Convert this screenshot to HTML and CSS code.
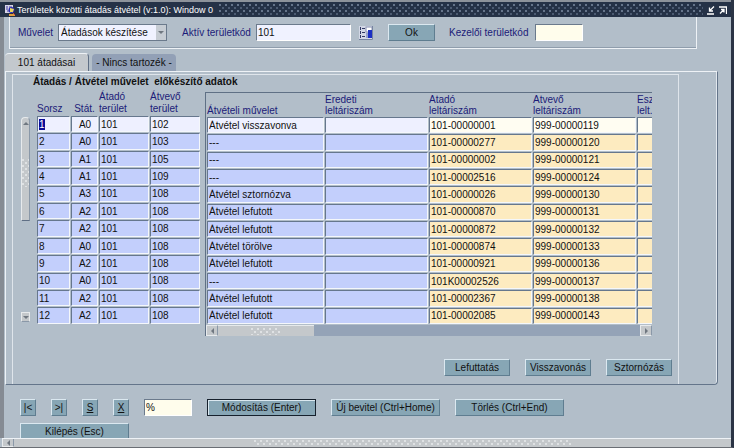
FILE: index.html
```html
<!DOCTYPE html>
<html lang="hu">
<head>
    <meta charset="UTF-8">
    <meta name="viewport" content="width=device-width, initial-scale=1.0">
    <title>Területek közötti átadás átvétel</title>
    <link rel="stylesheet" href="styles.css">
</head>
<body>
    <div class="window">
        <header class="titlebar">
            <svg class="app-icon" width="11" height="12" viewBox="0 0 11 12">
                <rect x="0" y="1" width="8" height="8" fill="#d8d4e8"/>
                <path d="M1 3h2M4 3h3M1 5h2M2 7h2" stroke="#3a3a9a"/>
                <circle cx="6.500" cy="6" r="3" fill="#2a2ab0"/>
                <path d="M5 4l4 1-1 3-3 0z" fill="#e8d860"/>
                <path d="M4 10h6v2H4z" fill="#e0a040"/>
                <path d="M8 9l2 2" stroke="#c04040"/>
            </svg>
            <span class="title">Területek közötti átadás átvétel (v:1.0): Window 0</span>
            <span class="grip"></span>
            <button class="title-btn" type="button" aria-label="Kis méret">
                <svg width="8" height="9" viewBox="0 0 8 9"><path d="M7 0.500L3 4.500M2.500 1.500V5H6M0 8H7" fill="none" stroke="#fff" stroke-width="1.300"/></svg>
            </button>
            <button class="title-btn" type="button" aria-label="Teljes méret">
                <svg width="8" height="9" viewBox="0 0 8 9"><path d="M0 1H7.500V8M1 7.500L5 3.500M2 3.500H5V6.500" fill="none" stroke="#fff" stroke-width="1.300"/></svg>
            </button>
        </header>

        <main class="content">
            <!-- Top filter bar -->
            <form class="filter">
                <label class="label-op" for="muvelet">Művelet</label>
                <span class="select-box">
                    <select id="muvelet">
                        <option>Átadások készítése</option>
                    </select>
                    <i class="select-arrow"><i class="arrow down"></i></i>
                </span>
                <label class="label-area" for="terulet">Aktív területkód</label>
                <input class="field active-area" type="text" id="terulet" value="101">
                <button class="list-btn" type="button" aria-label="Lista">
                    <svg width="14" height="14" viewBox="0 0 14 14">
                        <rect width="14" height="14" fill="#d3d8e6"/>
                        <path d="M1.500 1V12M3 2.500H6M3 6.500H6M3 10.500H6" stroke="#333a66" stroke-dasharray="3 1"/>
                        <rect x="7" y="1" width="6" height="5" fill="#fff" stroke="#8890b0"/>
                        <path d="M9 4h4v8h-4z" fill="#1b2fc4"/>
                        <path d="M7 7h2v5h-2z" fill="#93a0cc"/>
                        <path d="M0 13.500H13.500V0" fill="none" stroke="#7684a0"/>
                    </svg>
                </button>
                <button class="btn ok" type="button">Ok</button>
                <label class="label-user" for="kezelo">Kezelői területkód</label>
                <input class="field cream user-area" type="text" id="kezelo">
            </form>

            <div class="tabs" role="tablist">
                <button class="tab selected" type="button" role="tab" aria-selected="true">101 átadásai</button>
                <button class="tab" type="button" role="tab" aria-selected="false">- Nincs tartozék -</button>
            </div>

            <section class="panel">
                <div class="frame">
                    <h2>Átadás / Átvétel művelet&nbsp; előkészítő adatok</h2>
                    <div class="grids">
                        <div class="vscroll">
                            <div class="vthumb"><i class="arrow up"></i><i class="dots"></i></div>
                            <div class="vdown"><i class="arrow down"></i></div>
                        </div>

                        <table class="grid left">
                            <colgroup>
                                <col class="c-num"><col class="c-stat"><col class="c-area"><col class="c-area">
                            </colgroup>
                            <thead>
                                <tr><th>Sorsz</th><th class="mid">Stát.</th><th>Átadó<br>terület</th><th>Átvevő<br>terület</th></tr>
                            </thead>
                            <tbody id="leftRows"></tbody>
                        </table>

                        <div class="pane">
                            <table class="grid right">
                                <colgroup>
                                    <col class="c-op"><col class="c-inv"><col class="c-inv"><col class="c-inv"><col class="c-inv">
                                </colgroup>
                                <thead>
                                    <tr><th>Átvételi művelet</th><th>Eredeti<br>leltáriszám</th><th>Atadó<br>leltáriszám</th><th>Atvevő<br>leltáriszám</th><th>Esz<br>lelt.</th></tr>
                                </thead>
                                <tbody id="rightRows"></tbody>
                            </table>
                            <div class="hscroll">
                                <div class="hend"><i class="arrow prev"></i></div>
                                <div class="hthumb"><i class="dots"></i></div>
                                <div class="hend last"><i class="arrow next"></i></div>
                            </div>
                        </div>
                    </div>
                    <div class="actions">
                        <button class="btn" type="button">Lefuttatás</button>
                        <button class="btn" type="button">Visszavonás</button>
                        <button class="btn" type="button">Sztornózás</button>
                    </div>
                </div>
            </section>

            <div class="commands">
                <button class="btn small" type="button">|&lt;</button>
                <button class="btn small" type="button">&gt;|</button>
                <button class="btn small" type="button"><u>S</u></button>
                <button class="btn small" type="button"><u>X</u></button>
                <input class="field cream search" type="text" value="%" aria-label="Keresés">
                <button class="btn wide default" type="button">Módosítás (Enter)</button>
                <button class="btn wide" type="button">Új bevitel (Ctrl+Home)</button>
                <button class="btn wide" type="button">Törlés (Ctrl+End)</button>
            </div>
            <button class="btn wide exit" type="button">Kilépés (Esc)</button>
        </main>

        <div class="window-scroll">
            <div class="hend"><i class="arrow prev"></i></div>
            <div class="texture"></div>
        </div>
    </div>

    <script>
        // sorszám, státusz, átadó, átvevő, művelet, átadó leltáriszám, átvevő leltáriszám
        var rows = [
            ["1", "A0", "101", "102", "Átvétel visszavonva", "101-00000001", "999-00000119"],
            ["2", "A0", "101", "103", "---", "101-00000277", "999-00000120"],
            ["3", "A1", "101", "105", "---", "101-00000002", "999-00000121"],
            ["4", "A1", "101", "109", "---", "101-00002516", "999-00000124"],
            ["5", "A3", "101", "108", "Átvétel sztornózva", "101-00000026", "999-00000130"],
            ["6", "A2", "101", "108", "Átvétel lefutott", "101-00000870", "999-00000131"],
            ["7", "A2", "101", "108", "Átvétel lefutott", "101-00000872", "999-00000132"],
            ["8", "A0", "101", "108", "Átvétel törölve", "101-00000874", "999-00000133"],
            ["9", "A2", "101", "108", "Átvétel lefutott", "101-00000921", "999-00000136"],
            ["10", "A0", "101", "108", "---", "101K00002526", "999-00000137"],
            ["11", "A2", "101", "108", "Átvétel lefutott", "101-00002367", "999-00000138"],
            ["12", "A2", "101", "108", "Átvétel lefutott", "101-00002085", "999-00000143"]
        ];

        function addRow(body, cells) {
            var tr = document.createElement("tr");
            cells.forEach(function(cell) {
                var td = document.createElement("td");
                var input = document.createElement("input");
                td.className = cell[2] || "";
                input.type = "text";
                input.value = cell[0];
                input.setAttribute("aria-label", cell[1]);
                td.appendChild(input);
                tr.appendChild(td);
            });
            body.appendChild(tr);
        }

        rows.forEach(function(r) {
            addRow(document.getElementById("leftRows"), [
                [r[0], "Sorsz"], [r[1], "Stát.", "mid"], [r[2], "Átadó terület"], [r[3], "Átvevő terület"]
            ]);
            addRow(document.getElementById("rightRows"), [
                [r[4], "Átvételi művelet"], ["", "Eredeti leltáriszám"],
                [r[5], "Átadó leltáriszám", "yellow"], [r[6], "Átvevő leltáriszám", "yellow"],
                ["", "Eszköz leltáriszám", "yellow"]
            ]);
        });

        // Start on the first record
        var first = document.querySelector("#leftRows input");
        first.focus();
        first.select();
    </script>
</body>
</html>
```
FILE: styles.css
```css
* {
    box-sizing: border-box;
}

body {
    margin: 0;
    font-family: "Liberation Sans", Arial, sans-serif;
    font-size: 10px;
    line-height: 13px;
    color: #111;
    background-color: #b2bec9;
}

button,
input,
select {
    font: inherit;
    color: inherit;
    margin: 0;
    padding: 0;
    border: 0;
    border-radius: 0;
}

/* Window */
.window {
    display: flex;
    flex-direction: column;
    height: 100vh;
    min-height: 448px;
    border-right: 3px solid #2b3445;
    border-bottom: 1px solid #6a6e74;
    overflow: hidden;
}

.titlebar {
    display: flex;
    align-items: center;
    flex: none;
    height: 17px;
    padding: 1px 0 0 5px;
    background-color: #253247;
    border-top: 2px solid #8d939b;
    color: #fff;
}

.title {
    margin-left: 1px;
    font-size: 9px;
    white-space: nowrap;
}

.grip {
    flex: 1;
    height: 12px;
    margin: 0 4px 0 6px;
    background-image: radial-gradient(circle at 1px 1px, #66758b 1px, transparent 1px), radial-gradient(circle at 4px 4px, #4c5b72 1px, transparent 1px);
    background-size: 6px 6px;
}

.title-btn {
    display: flex;
    width: 8px;
    margin-right: 4px;
    background: none;
}

.content {
    flex: 1;
    min-height: 0;
    overflow: hidden;
    border-left: 4px solid #858b93;
    padding-left: 1px;
}

/* Filter bar */
.filter {
    display: flex;
    align-items: center;
    height: 32px;
    margin: 0 34px 0 4px;
    padding-left: 8px;
    border: 1px solid #eef2f6;
    border-top: 0;
    box-shadow: inset 0 -1px #8f9dac;
}

label,
th {
    color: #1b1b78;
}

.label-op {
    width: 40px;
}

.label-area {
    margin: 0 7px 0 15px;
    width: 67px;
    white-space: nowrap;
}

.label-user {
    margin-left: 14px;
    width: 86px;
    white-space: nowrap;
}

.field {
    height: 17px;
    padding-left: 1px;
    background-color: #f0f2ff;
    border: 1px solid #fff;
    border-top-color: #6b7a8c;
    border-left-color: #6b7a8c;
}

.cream {
    background-color: #fffdec;
}

.select-box {
    position: relative;
}

select {
    display: block;
    appearance: none;
    width: 109px;
    height: 17px;
    padding-left: 2px;
    background-color: #f0f2ff;
    border: 1px solid #6b7a8c;
}

.select-arrow {
    position: absolute;
    top: 1px;
    right: 1px;
    display: flex;
    align-items: center;
    justify-content: center;
    width: 10px;
    height: 15px;
    background-color: #c6ccd3;
    pointer-events: none;
}

.active-area {
    width: 95px;
}

.list-btn {
    display: flex;
    margin: 0 15px 0 8px;
    background: none;
}

.user-area {
    width: 48px;
}

.btn {
    height: 17px;
    background-color: #87a6b5;
    border: 1px solid #dbe8f0;
    border-right-color: #5f7d90;
    border-bottom-color: #5f7d90;
    white-space: nowrap;
}

.ok {
    width: 47px;
}

/* Tabs */
.tabs {
    display: flex;
    align-items: flex-end;
    gap: 3px;
    height: 22px;
}

.tab {
    width: 84px;
    height: 17px;
    background-color: #92a0b6;
    border-radius: 4px 4px 0 0;
    white-space: nowrap;
}

.tab.selected {
    height: 18px;
    background-color: #c3c8cd;
    border-top: 1px solid #eef2f6;
    border-right: 1px solid #5f6f85;
}

.panel {
    margin-right: 13px;
    padding: 2px 38px 0 6px;
    border: 1px solid #eef2f6;
    border-right: 1px solid #64758a;
    border-bottom: 1px solid #64758a;
    border-radius: 0 0 4px 0;
    box-shadow: inset -1px 0 #e2e8ee;
}

.frame {
    height: 310px;
    padding: 0 26px 0 8px;
    border: 1px solid #dfe5eb;
    border-bottom: 0;
}

h2 {
    margin: 0 0 2px 12px;
    font-size: 10px;
    line-height: 13px;
    white-space: nowrap;
}

.grids {
    display: flex;
    align-items: flex-start;
}

/* Scroll bars */
.vscroll {
    display: flex;
    flex-direction: column;
    justify-content: space-between;
    flex: none;
    width: 9px;
    height: 207px;
    margin: 27px 6px 0 0;
}

.vthumb {
    display: flex;
    flex-direction: column;
    align-items: center;
    gap: 34px;
    height: 104px;
    padding-top: 4px;
    background-color: #c4c8cb;
    border: 1px solid #e7eaec;
    border-right-color: #8a98a8;
    border-bottom-color: #5f6f85;
    border-radius: 4px 4px 0 0;
}

.vdown {
    display: flex;
    align-items: center;
    justify-content: center;
    height: 10px;
    margin-bottom: 2px;
    background-color: #c4c8cb;
    border: 1px solid #e7eaec;
    border-bottom-color: #8a98a8;
}

.arrow {
    width: 0;
    height: 0;
    border: 3px solid transparent;
}

.up {
    border-top: 0;
    border-bottom-color: #6f7780;
}

.down {
    border-bottom: 0;
    border-top-color: #6f7780;
}

.prev {
    border-left: 0;
    border-right-color: #6f7780;
}

.next {
    border-right: 0;
    border-left-color: #6f7780;
}

.dots {
    width: 7px;
    height: 28px;
    background-image: radial-gradient(circle at 1px 1px, #dfe2e4 1px, transparent 1px), radial-gradient(circle at 4px 4px, #dfe2e4 1px, transparent 1px);
    background-size: 6px 6px;
}

.hscroll {
    display: flex;
    height: 11px;
    background-color: #94a3b7;
}

.hend {
    display: flex;
    align-items: center;
    justify-content: center;
    flex: none;
    width: 12px;
    background-color: #c4c8cb;
    border: 1px solid #e7eaec;
    border-right-color: #8a98a8;
}

.hthumb {
    display: flex;
    align-items: center;
    justify-content: center;
    width: 96px;
    background-color: #c4c8cb;
    border-top: 1px solid #e7eaec;
}

.hthumb .dots {
    width: 30px;
    height: 7px;
}

.last {
    margin-left: auto;
}

/* Data grids */
.grid {
    flex: none;
    table-layout: fixed;
    border-collapse: separate;
    border-spacing: 1px;
}

.left {
    width: 165px;
    height: 235px;
    margin-right: 4px;
}

.right {
    width: 535px;
    height: 232px;
}

.c-num {
    width: 33px;
}

.c-stat {
    width: 27px;
}

.c-area {
    width: 50px;
}

.c-op {
    width: 117px;
}

.c-inv {
    width: 103px;
}

th {
    height: 24px;
    padding: 0;
    font-weight: normal;
    line-height: 12px;
    text-align: left;
    vertical-align: bottom;
    white-space: nowrap;
}

td {
    padding: 0;
    background-color: #c3cffc;
    border: 1px solid #f4f7fb;
    border-top-color: #66778d;
    border-left-color: #66778d;
}

td input {
    display: block;
    width: 100%;
    height: 14px;
    padding-left: 1px;
    background: none;
    outline: 0;
}

td input::selection {
    background-color: #0b0b96;
    color: #fff;
}

tr:first-child td {
    background-color: #eef0ff;
}

.mid,
.mid input {
    text-align: center;
}

td.yellow {
    background-color: #fdebc0;
}

tr:first-child td.yellow {
    background-color: #fffdf2;
}

.pane {
    flex: 1;
    min-width: 0;
    margin-top: 2px;
    overflow: hidden;
    border-top: 1px solid #5f7085;
    border-left: 1px solid #5f7085;
}

.right th {
    height: 22px;
    line-height: 11px;
}

/* Buttons under the grids */
.actions {
    display: flex;
    justify-content: flex-end;
    gap: 15px;
    margin: 23px -20px 0 0;
}

.actions .btn {
    width: 66px;
}

.commands {
    display: flex;
    align-items: center;
    gap: 15px;
    padding: 14px 0 0 15px;
}

.small {
    width: 16px;
}

.search {
    width: 48px;
}

.wide {
    width: 109px;
}

.default {
    border: 1px solid #16202c;
    box-shadow: inset 1px 1px #dbe8f0;
}

.exit {
    margin: 7px 0 0 15px;
}

/* Window scroll bar */
.window-scroll {
    display: flex;
    flex: none;
    height: 9px;
    margin-left: 2px;
    background-color: #c4c8cb;
    border-top: 1px solid #eef2f6;
}

.window-scroll .hend {
    border-top: 0;
}

.texture {
    flex: 1;
    margin: 1px 160px 1px 240px;
    background-image: radial-gradient(circle at 1px 1px, #dfe2e4 1px, transparent 1px), radial-gradient(circle at 4px 4px, #dfe2e4 1px, transparent 1px);
    background-size: 6px 6px;
}
```
